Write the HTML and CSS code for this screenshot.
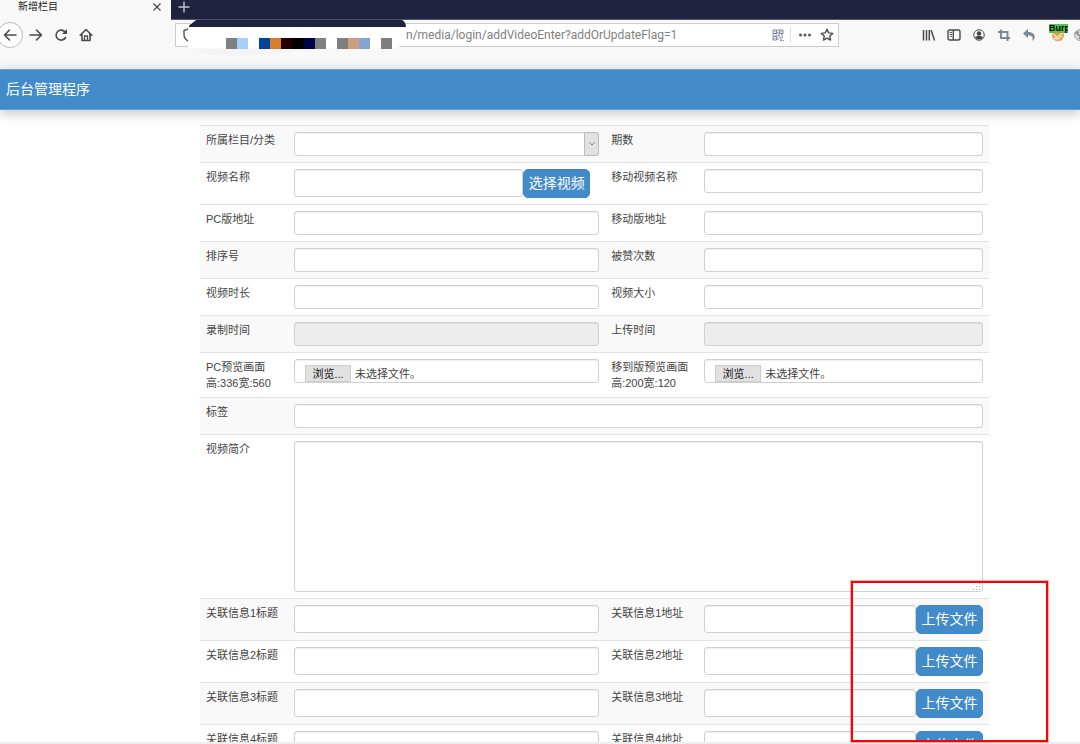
FILE: index.html
```html
<!DOCTYPE html>
<html lang="zh-CN">
<head>
<meta charset="utf-8">
<title>新增栏目</title>
<link rel="stylesheet" href="styles.css">
</head>
<body>
<div class="browser">
  <div class="tabs">
    <div class="tab"><span class="tab-title">新增栏目</span>
      <button class="icon-btn" aria-label="关闭标签页"><svg width="10" height="10" viewBox="0 0 10 10"><path d="M1.500 1.500l7 7m0-7l-7 7" stroke="#444" stroke-width="1.100"/></svg></button>
    </div>
    <button class="icon-btn new-tab" aria-label="新标签页"><svg width="12" height="12" viewBox="0 0 12 12"><path d="M6 .5v11M.5 6h11" stroke="#c4c4cd" stroke-width="1.400"/></svg></button>
  </div>
  <div class="toolbar">
    <button class="icon-btn back" aria-label="后退"><svg width="14" height="14" viewBox="0 0 14 14" class="line"><path d="M13 7H1.500M6.500 2l-5 5 5 5"/></svg></button>
    <nav class="nav">
      <button class="icon-btn" aria-label="前进"><svg width="14" height="14" viewBox="0 0 14 14" class="line"><path d="M1 7h11.500M7.500 2l5 5-5 5"/></svg></button>
      <button class="icon-btn" aria-label="刷新"><svg width="14" height="14" viewBox="0 0 14 14" class="line"><path d="M11.500 9.500A5 5 0 1 1 11 4"/><path d="M13 1v5H8z" fill="#4a4a4a" stroke="none"/></svg></button>
      <button class="icon-btn" aria-label="主页"><svg width="14" height="14" viewBox="0 0 14 14" class="line"><path d="M1.200 7.200L7 1.500l5.800 5.700M3 6.500V12.500h8V6.500"/><path d="M5.500 12V8h3v4" stroke-width="1.300"/></svg></button>
    </nav>
    <div class="url">
      <svg class="shield" width="12" height="14" viewBox="0 0 12 14"><path d="M6 1L2 2.500v4C2 9.500 3.500 11.500 6 13c2.500-1.500 4-3.500 4-6.500v-4z" fill="none" stroke="#555" stroke-width="1.400"/></svg>
      <input class="address" aria-label="地址" value="n/media/login/addVideoEnter?addOrUpdateFlag=1">
      <svg width="12" height="12" viewBox="0 0 12 12" fill="none" stroke="#7c8698"><path d="M1 1h3.500v3.500H1zM7.500 1H11v3.500H7.500zM1 7.500h3.500V11H1z"/><path d="M6 0v12M0 6h12M8 7v3h2V8h2M8 11.500h4" stroke-dasharray="2 1"/><path d="M2 2.800h1.500M8.500 2.800H10M2 9.300h1.500"/></svg>
      <span class="divider"></span>
      <svg width="14" height="4" viewBox="0 0 14 4" fill="#555"><circle cx="2.500" cy="2" r="1.500"/><circle cx="7" cy="2" r="1.500"/><circle cx="11.500" cy="2" r="1.500"/></svg>
      <svg width="14" height="14" viewBox="0 0 14 14"><path d="M7 1.300l1.700 3.600 4 .5-2.900 2.700.7 4L7 10.200l-3.500 1.900.7-4L1.300 5.400l4-.5z" fill="none" stroke="#4a4a4a" stroke-width="1.400" stroke-linejoin="round"/></svg>
    </div>
    <div class="tools">
      <svg width="14" height="14" viewBox="0 0 14 14" stroke="#4a4a4a" stroke-width="1.500"><path d="M1.500 2v10.500M4.500 2v10.500M7.300 2v10.500M9 2l3.600 10.500"/></svg>
      <svg width="14" height="14" viewBox="0 0 14 14" fill="none" stroke="#4a4a4a" stroke-width="1.400"><rect x="1" y="2" width="12" height="10" rx="1.800"/><path d="M6.300 2v10"/><path d="M2.500 4.500H5M2.500 6.500H5M3 8.300h2" stroke-width=".9"/></svg>
      <svg width="14" height="14" viewBox="0 0 14 14"><circle cx="7" cy="7" r="5.300" fill="none" stroke="#555" stroke-width="1"/><circle cx="7" cy="5.500" r="2.200" fill="#444"/><path d="M3 9.500C4 7.500 10 7.500 11 9.500 9.500 12 4.500 12 3 9.500z" fill="#444"/></svg>
      <svg width="14" height="14" viewBox="0 0 14 14" fill="none" stroke="#7c8795" stroke-width="1.900"><path d="M1 4h9.500v9M4 1.500V10h9"/></svg>
      <svg width="14" height="14" viewBox="0 0 14 14"><path d="M1 5.500L6 1v3c5 0 7 2.500 6.700 5.500-.2 1.600-1.200 2.800-2.500 3.300C11.500 9.500 10 7.500 6 7.300V10z" fill="#7c8795"/></svg>
      <span class="burp"><svg width="14" height="14" viewBox="0 0 14 14"><circle cx="7" cy="7" r="6" fill="#f39a3d"/><path d="M2 6l4 3 6-4M3 10l4 1 4-3" stroke="#fbe3c5" stroke-width="1.500" fill="none"/><path d="M1.500 9a6 6 0 0 0 10 2" stroke="#bdb5aa" fill="none"/></svg><b class="badge">Burp</b></span>
      <svg class="globe" width="14" height="14" viewBox="0 0 14 14"><circle cx="7" cy="7" r="5.500" fill="#ddd" stroke="#aaa"/><path d="M2 6l3-2v3l3 1-2 3" stroke="#888" fill="none" stroke-width="1.500"/></svg>
    </div>
  </div>
  <svg class="redaction" width="220" height="38" viewBox="0 0 220 38"><path d="M0 5C5 2 6 0 8 0h206l4 6v18c-8 0-4 4-12 4H0z" fill="#fff"/><path d="M4 0h210c2 1 4 3 4 7H1c0-3 3-3 7-7z" fill="#202340"/><path d="M0 29h120C88 35 48 38 22 34 10 32 8 29 0 29z" fill="#f4f4f4"/>
    <g shape-rendering="crispEdges"><path d="M38 18h11v11H38zM127 18h11v11h-11zM149 18h11v11h-11zM193 18h11v11h-11z" fill="#7f7f7f"/><path d="M138 18h-11v11h11z" fill="#7f7f7f"/><path d="M49 18h11v11H49z" fill="#a3ceff"/><path d="M71 18h11v11H71z" fill="#00429b"/><path d="M82 18h11v11H82z" fill="#d77d2b"/><path d="M93 18h11v11H93z" fill="#230000"/><path d="M104 18h12v11h-12z" fill="#000"/><path d="M116 18h11v11h-11z" fill="#00004b"/><path d="M160 18h11v11h-11z" fill="#cda07d"/><path d="M171 18h11v11h-11z" fill="#84a4d2"/></g></svg>
</div>
<header class="app-bar">后台管理程序</header>
<main class="page">
  <form>
    <table class="form-table">
      <colgroup><col class="col-label"><col class="col-field"><col class="col-label2"><col></colgroup>
      <tr><th><label for="cat">所属栏目/分类</label></th><td><div class="select-wrap"><select id="cat" class="control"><option></option></select><span class="arrow"><svg width="6" height="4" viewBox="0 0 6 4"><path d="M.5.500L3 3 5.500.500" fill="none" stroke="#777"/></svg></span></div></td><th><label for="issue">期数</label></th><td><input id="issue" class="control"></td></tr>
      <tr><th><label for="name">视频名称</label></th><td><div class="group inset"><input id="name" class="control tall"><button type="button" class="btn">选择视频</button></div></td><th><label for="mname">移动视频名称</label></th><td><input id="mname" class="control"></td></tr>
      <tr><th><label for="pc">PC版地址</label></th><td><input id="pc" class="control"></td><th><label for="mob">移动版地址</label></th><td><input id="mob" class="control"></td></tr>
      <tr class="shade"><th><label for="order">排序号</label></th><td><input id="order" class="control"></td><th><label for="likes">被赞次数</label></th><td><input id="likes" class="control"></td></tr>
      <tr><th><label for="len">视频时长</label></th><td><input id="len" class="control"></td><th><label for="size">视频大小</label></th><td><input id="size" class="control"></td></tr>
      <tr class="shade"><th><label for="rec">录制时间</label></th><td><input id="rec" class="control" disabled></td><th><label for="up">上传时间</label></th><td><input id="up" class="control" disabled></td></tr>
      <tr><th><label for="pcimg">PC预览画面<br>高:336宽:560</label></th><td><label class="control file"><input type="file" id="pcimg"><span class="browse">浏览...</span><span>未选择文件。</span></label></td><th><label for="mimg">移到版预览画面<br>高:200宽:120</label></th><td><label class="control file"><input type="file" id="mimg"><span class="browse">浏览...</span><span>未选择文件。</span></label></td></tr>
      <tr class="shade"><th><label for="tag">标签</label></th><td colspan="3"><input id="tag" class="control"></td></tr>
      <tr><th><label for="intro">视频简介</label></th><td colspan="3"><div class="area-wrap"><textarea id="intro" class="control area"></textarea><svg class="grip" width="8" height="8" viewBox="0 0 8 8" fill="#aaa"><path d="M6 0h1v1H6zM3 3h1v1H3zM6 3h1v1H6zM0 6h1v1H0zM3 6h1v1H3zM6 6h1v1H6z"/></svg></div></td></tr>
      <tr class="shade"><th><label for="t1">关联信息1标题</label></th><td><input id="t1" class="control tall"></td><th><label for="a1">关联信息1地址</label></th><td><div class="group"><input id="a1" class="control tall"><button type="button" class="btn">上传文件</button></div></td></tr>
      <tr><th><label for="t2">关联信息2标题</label></th><td><input id="t2" class="control tall"></td><th><label for="a2">关联信息2地址</label></th><td><div class="group"><input id="a2" class="control tall"><button type="button" class="btn">上传文件</button></div></td></tr>
      <tr class="shade"><th><label for="t3">关联信息3标题</label></th><td><input id="t3" class="control tall"></td><th><label for="a3">关联信息3地址</label></th><td><div class="group"><input id="a3" class="control tall"><button type="button" class="btn">上传文件</button></div></td></tr>
      <tr><th><label for="t4">关联信息4标题</label></th><td><input id="t4" class="control tall"></td><th><label for="a4">关联信息4地址</label></th><td><div class="group"><input id="a4" class="control tall"><button type="button" class="btn">上传文件</button></div></td></tr>
    </table>
  </form>
</main>
<div class="highlight"></div>
</body>
</html>
```

FILE: styles.css
```css
* { box-sizing: border-box; }
body {
  position: relative;
  display: flex;
  flex-direction: column;
  height: 100vh;
  margin: 0;
  overflow: hidden;
  background: #fff;
  color: #444;
  font: 11px/16px "Liberation Sans", "Noto Sans CJK SC", sans-serif;
}
svg { display: block; flex: none; }
input, select, textarea, button { font: inherit; color: inherit; margin: 0; }

.browser { position: relative; flex: none; background: #f8f8f8; }
.tabs { display: flex; height: 20px; background: #202340; border-bottom: 1px solid #55526b; }
.tab {
  display: flex;
  align-items: center;
  justify-content: space-between;
  width: 171px;
  height: 20px;
  padding: 0 9px 6px 18px;
  background: #f8f8f8;
  color: #222;
}
.tab-title { font-size: 10px; line-height: 14px; }
.icon-btn {
  display: flex;
  align-items: center;
  justify-content: center;
  padding: 0;
  border: 0;
  background: none;
}
.new-tab { height: 14px; margin-left: 7px; }
.toolbar { display: flex; align-items: center; height: 49px; padding-bottom: 19px; overflow: hidden; }
.line { fill: none; stroke: #4a4a4a; stroke-width: 1.6px; stroke-linecap: round; stroke-linejoin: round; }
.back {
  flex: none;
  width: 26px;
  height: 26px;
  margin-left: -3px;
  border: 1px solid #bbb;
  border-radius: 50%;
  background: #fff;
}
.nav { display: flex; gap: 11px; margin-left: 6px; }
.url {
  display: flex;
  flex: 1;
  align-items: center;
  gap: 8px;
  height: 24px;
  margin-left: 82px;
  padding: 0 4px 0 6px;
  border: 1px solid #ccc;
  background: #fff;
}
.address {
  flex: 1;
  min-width: 0;
  padding: 0 0 0 204px;
  border: 0;
  background: none;
  color: #808080;
  font: 12px/16px Roboto, "Open Sans", sans-serif;
}
.divider { width: 1px; height: 16px; margin: 0 -1px 0 -2px; background: #ddd; }
.tools { display: flex; flex: none; align-items: center; gap: 11px; margin: 0 -7px 0 83px; }
.burp { position: relative; margin-left: 4px; }
.badge {
  position: absolute;
  top: -4px;
  left: -2px;
  width: 19px;
  height: 9px;
  overflow: hidden;
  background: #55c455;
  color: #000;
  font-size: 9px;
  line-height: 9px;
}
.globe { margin-left: -3px; }
.redaction { position: absolute; left: 188px; top: 20px; }

.app-bar {
  position: relative;
  z-index: 1;
  flex: none;
  height: 41px;
  padding-left: 6px;
  border: solid #6ba3d3;
  border-width: 1px 0;
  background: #428bca;
  box-shadow: 0 3px 12px rgba(0, 0, 0, .25);
  color: #fff;
  font-size: 14px;
  line-height: 39px;
}

.page {
  flex: 1;
  min-height: 0;
  overflow: hidden;
  padding: 15px 91px 0 200px;
  border-bottom: 2px solid #eee;
}
.form-table { width: 100%; table-layout: fixed; border-spacing: 0; }
.col-label { width: 88px; }
.col-field { width: 40.2%; }
.col-label2 { width: 93px; }
th, td { padding: 6px; border-top: 1px solid #e2e2e2; text-align: left; vertical-align: top; font-weight: 400; }
th { white-space: nowrap; }
th label { display: block; }
.shade, tr:first-child { background: #f9f9f9; }
.control {
  display: block;
  width: 100%;
  height: 24px;
  padding: 2px 9px;
  border: 1px solid #d0d0d0;
  border-radius: 3px;
  background: #fff;
  box-shadow: inset 0 1px 1px rgba(0, 0, 0, .07);
}
.control:disabled { background: #ededed; }
.tall { height: 28px; }
.select-wrap, .area-wrap { position: relative; }
select.control { appearance: none; }
.arrow {
  position: absolute;
  top: 0;
  right: 0;
  display: flex;
  align-items: center;
  justify-content: center;
  width: 15px;
  height: 24px;
  border: 1px solid #bbb;
  border-radius: 0 3px 3px 0;
  background: #e1e1e1;
  pointer-events: none;
}
.group { display: flex; }
.group .control { flex: 1; min-width: 0; }
.inset { padding-right: 9px; }
.btn {
  flex: none;
  width: 67px;
  height: 29px;
  padding: 0 0 2px;
  border: 1px solid #4388c4;
  border-radius: 5px;
  background: #428bca;
  color: #fff;
  font-size: 14px;
  line-height: 20px;
  white-space: nowrap;
}
.file { position: relative; display: flex; gap: 4px; padding: 5px 10px 0; overflow: hidden; line-height: 18px; }
.file input { position: absolute; width: 1px; height: 1px; opacity: 0; }
.browse { width: 46px; height: 17px; border: 1px solid #ccc; background: #e1e1e1; color: #111; text-align: center; line-height: 16px; }
.area { height: 151px; resize: none; }
.grip { position: absolute; right: 2px; bottom: 1px; }
.highlight {
  position: absolute;
  z-index: 2;
  top: 581px;
  left: 851px;
  width: 197px;
  height: 161px;
  border: 2px solid #f00;
  outline: 1px solid rgba(255, 0, 0, .3);
  pointer-events: none;
}
```
